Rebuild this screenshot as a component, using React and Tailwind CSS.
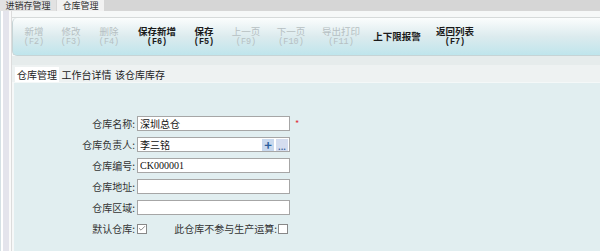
import { Check } from 'lucide-react';

const buttons = [
  { l1: '新增', l2: '(F2)', w: 'w-[42px]', on: false },
  { l1: '修改', l2: '(F3)', w: 'w-[32px]', on: false },
  { l1: '删除', l2: '(F4)', w: 'w-[44px]', on: false },
  { l1: '保存新增', l2: '(F6)', w: 'w-[52px]', on: true },
  { l1: '保存', l2: '(F5)', w: 'w-[42px]', on: true },
  { l1: '上一页', l2: '(F9)', w: 'w-[42px]', on: false },
  { l1: '下一页', l2: '(F10)', w: 'w-[48px]', on: false },
  { l1: '导出打印', l2: '(F11)', w: 'w-[52px]', on: false },
  { l1: '上下限报警', l2: '', w: 'w-[60px]', on: true },
  { l1: '返回列表', l2: '(F7)', w: 'w-[56px]', on: true },
];

const Field = ({ label, children }) => (
  <div className="flex items-center h-[15px]">
    <span className="w-[123px] text-right pr-[2px] text-[10px] leading-none text-[#333] whitespace-nowrap">{label}:</span>
    {children}
  </div>
);

const Input = ({ value, serif, children }) => (
  <div className="w-[153px] h-[15px] border border-[#a6a6a6] bg-white flex items-center pl-[2px]">
    <span className={`flex-1 text-[10px] leading-none text-[#111] ${serif ? "font-['Liberation_Serif',serif]" : ''}`}>{value}</span>
    {children}
  </div>
);

const App = () => {
  return (
    <div className="w-[600px] h-[251px] overflow-hidden flex flex-col bg-[#eef2f2] font-['Noto_Sans_CJK_SC','Noto_Sans',sans-serif]">
      {/* 顶部页签 */}
      <div className="h-[11px] shrink-0 bg-[#d6d6d6] flex">
        <div className="h-[11px] w-[56px] bg-[#e2e2e2] text-center text-[9px] leading-[11px] text-[#333]">进销存管理</div>
        <div className="h-[11px] w-[47px] bg-[#f2f2f2] ml-[1px] text-center text-[9px] leading-[11px] text-[#333]">仓库管理</div>
      </div>

      <div className="flex-1 flex">
        {/* 左侧边条 */}
        <div className="w-[12px] shrink-0 flex">
          <div className="w-[1px] bg-[#d4e0e4]" />
          <div className="w-[2px] bg-white" />
          <div className="w-[6px] bg-[#e4e4ec]" />
          <div className="w-[2px] bg-[#fafafa]" />
          <div className="w-[1px] bg-[#dcdcdc]" />
        </div>

        <div className="flex-1 flex flex-col bg-[#f6f8f8]">
          <div className="h-[7px] border-b border-[#d6dada]" />
          {/* 工具栏 */}
          <div className="h-[38px] rounded-l-[5px] border-l border-b border-[#c6d4d6] bg-gradient-to-b from-[#fbfdfd] via-[#dcebee] to-[#bfe5ec] flex items-center">
            {buttons.map((b) => (
              <div key={b.l1} className={`${b.w} flex flex-col items-center text-[9.5px] leading-[11px] ${b.on ? 'text-[#1a1a1a] font-semibold' : 'text-[#b6bfc2]'}`}>
                <span>{b.l1}</span>
                <span className="font-['Liberation_Mono',monospace] text-[8.5px]">{b.l2}</span>
              </div>
            ))}
          </div>
          <div className="h-[9px] bg-[#e6ecec]" />

          {/* 页签 */}
          <div className="h-[17px] bg-[#eef2f2] flex items-end pl-[3px] text-[10px] leading-none text-[#222]">
            <div className="h-[15px] w-[44px] bg-white flex items-center justify-center">仓库管理</div>
            <div className="h-[15px] w-[55px] flex items-center justify-center">工作台详情</div>
            <div className="h-[15px] w-[52px] flex items-center justify-center">该仓库库存</div>
          </div>

          {/* 表单 */}
          <div className="flex-1 ml-[2px] bg-[#e1eef0] border-t border-[#f4f8f8] pt-[33px] flex flex-col gap-[6px]">
            <Field label="仓库名称">
              <Input value="深圳总仓" />
              <span className="ml-[5px] text-[9px] leading-none text-[#e0303a]">*</span>
            </Field>
            <Field label="仓库负责人">
              <Input value="李三铭">
                <span className="w-[12px] h-[12px] bg-[#c9d9ee] flex items-center justify-center text-[#2d5f9e] text-[13px] font-bold leading-none">+</span>
                <span className="w-[12px] h-[12px] ml-[2px] mr-[1px] bg-[#d5ddef] flex items-end justify-center text-[#3a5fa0] text-[8px] leading-[9px] font-bold">...</span>
              </Input>
            </Field>
            <Field label="仓库编号">
              <Input value="CK000001" serif />
            </Field>
            <Field label="仓库地址">
              <Input value="" />
            </Field>
            <Field label="仓库区域">
              <Input value="" />
            </Field>
            <Field label="默认仓库">
              <span className="w-[10px] h-[10px] border border-[#888] bg-white flex items-center justify-center">
                <Check size={9} strokeWidth={2} className="text-[#555]" />
              </span>
              <span className="ml-[18px] w-[112px] text-right text-[10px] leading-none text-[#333] whitespace-nowrap">此仓库不参与生产运算:</span>
              <span className="ml-[1px] w-[10px] h-[10px] border border-[#888] bg-white" />
            </Field>
          </div>
        </div>
      </div>
    </div>
  );
};

export default App;
